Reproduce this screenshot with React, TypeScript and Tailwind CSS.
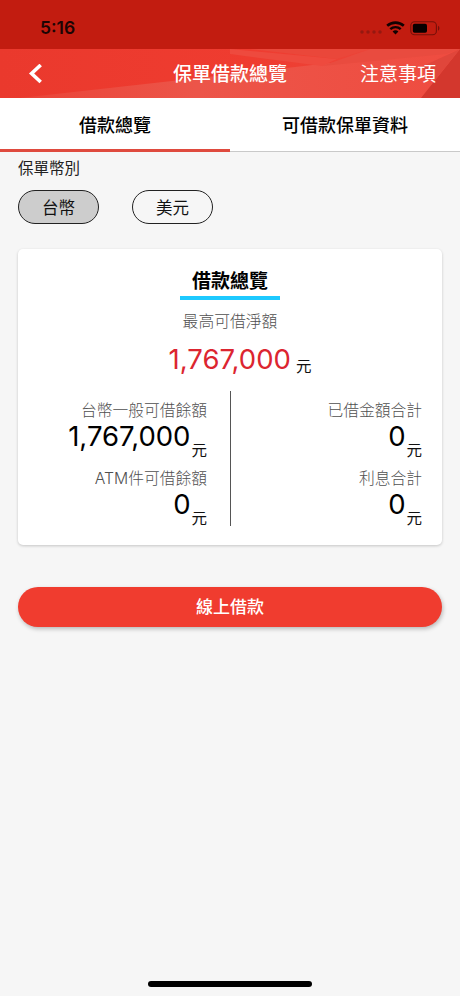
function StatusBar() {
  return (
    <div className="flex h-[49px] items-center justify-between bg-[#c21c10] pl-[40px] pr-[20px] pt-[7px]">
      <span className="text-[17.5px] font-semibold leading-5 text-[#1c0504]">5:16</span>
      <div className="flex items-center">
        <svg width="22" height="4" viewBox="0 0 22 4" className="mr-[4px] mt-[8px]" fill="#951810">
          <circle cx="2" cy="2" r="1.7" />
          <circle cx="8" cy="2" r="1.7" />
          <circle cx="14" cy="2" r="1.7" />
          <circle cx="20" cy="2" r="1.7" />
        </svg>
        <svg width="19" height="14" viewBox="0 0 19 14" fill="none" stroke="#120202" className="mr-[5px]">
          <path d="M1.2 4.8C5.8 .5 13.2 .5 17.8 4.8" strokeWidth="2.6" />
          <path d="M4.3 8.1C7.2 5.4 11.8 5.4 14.7 8.1" strokeWidth="2.4" />
          <path d="M6.6 10.4C8.3 8.9 10.7 8.9 12.4 10.4L9.5 13.4Z" fill="#120202" stroke="none" />
        </svg>
        <svg width="30" height="15" viewBox="0 0 30 15">
          <rect x=".8" y=".8" width="25.6" height="13" rx="3.8" fill="none" stroke="#761009" strokeWidth="1.1" />
          <rect x="2.8" y="2.8" width="14.2" height="9" rx="1.8" fill="#080000" />
          <path d="M28 4.8C29.9 5.6 29.9 9 28 9.8Z" fill="#761009" />
        </svg>
      </div>
    </div>
  );
}

function Header() {
  return (
    <header className="relative h-[49px] bg-[#ec3b2f]">
      <svg className="absolute inset-0" width="460" height="49" viewBox="0 0 460 49" preserveAspectRatio="none">
        <defs>
          <linearGradient id="base" x1="0" x2="1" y1="0" y2="0">
            <stop offset="0" stopColor="#ea392d" />
            <stop offset=".55" stopColor="#ef3c30" />
            <stop offset="1" stopColor="#ea4a3e" />
          </linearGradient>
          <linearGradient id="sweep" x1="0" x2="1" y1="0" y2="0">
            <stop offset="0" stopColor="#ea4438" />
            <stop offset=".4" stopColor="#ec5549" />
            <stop offset="1" stopColor="#ef4c40" />
          </linearGradient>
        </defs>
        <rect width="460" height="49" fill="url(#base)" />
        <path d="M20 49L172 32L330 14L460 0V49Z" fill="url(#sweep)" />
        <path d="M230 0L337 10L322 17L230 5Z" fill="#ee4a3e" />
        <path d="M322 17L370 0H460L446 5Z" fill="#e94b3f" />
        <path d="M337 10L370 0H250Z" fill="#ea473a" />
        <path d="M460 0L421 49H460Z" fill="#d3372d" />
        <path d="M460 0L421 18L435 31Z" fill="#e0463b" />
      </svg>
      <div className="relative grid h-full grid-cols-[1fr_auto_1fr] items-center text-[19px] leading-6 text-white">
        <svg className="ml-[28px]" width="15" height="20" viewBox="0 0 15 20" fill="none" stroke="white" strokeWidth="3.6">
          <path d="M12.7 1L3.6 9.5L12.7 18" />
        </svg>
        <span className="pt-[3px] font-medium">保單借款總覽</span>
        <span className="justify-self-end pr-[24px] pt-[3px]">注意事項</span>
      </div>
    </header>
  );
}

function Amount({ label, value }: { label: string; value: string }) {
  return (
    <div className="flex h-[68px] flex-col items-end">
      <div className="text-[15.75px] font-light leading-6 text-[#505050]">{label}</div>
      <div className="flex items-start">
        <span className="mr-[1px] mt-[-2px] text-[27.5px] leading-[30px] text-black">{value}</span>
        <span className="mt-[16px] h-4 text-[15.5px] leading-6 text-[#111]">元</span>
      </div>
    </div>
  );
}

export default function App() {
  return (
    <main className="flex h-[996px] w-[460px] flex-col overflow-hidden bg-[#f6f6f6] font-['Inter','Noto_Sans_CJK_TC',sans-serif] text-black">
      <StatusBar />
      <Header />
      <nav className="grid h-[54px] grid-cols-2 text-center text-[18px] font-medium leading-[55px]">
        <div className="h-[54px] border-b-[3px] border-[#df4a3e] bg-white">借款總覽</div>
        <div className="h-[54px] border-b border-[#c9c9c9] bg-white">可借款保單資料</div>
      </nav>
      <section className="px-[18px]">
        <div className="mt-[5px] text-[15.5px] leading-6 text-[#222]">保單幣別</div>
        <div className="mt-[9px] flex gap-[33px] text-[16.5px] text-[#111]">
          <button className="h-[34px] w-[81px] rounded-full border border-[#222] bg-[#cdcdcd] pt-[2px]">台幣</button>
          <button className="h-[34px] w-[81px] rounded-full border border-[#222] pt-[2px]">美元</button>
        </div>
      </section>
      <section className="mx-[18px] mt-[25px] flex h-[296px] flex-col items-center rounded-[5px] bg-white shadow-[0_1px_3px_rgba(0,0,0,0.2)]">
        <h1 className="mt-[17px] h-[34px] w-[100px] border-b-4 border-[#1dc9ff] text-center text-[19px] font-bold leading-[32px]">借款總覽</h1>
        <div className="mt-[10px] text-[15.8px] font-light leading-6 text-[#505050]">最高可借淨額</div>
        <div className="mt-[9px] flex h-[32px] items-start pl-[20px]">
          <span className="text-[27.5px] leading-[33px] text-[#dc2530]">1,767,000</span>
          <span className="ml-[5px] mt-[12px] h-5 text-[15.5px] leading-6 text-[#111]">元</span>
        </div>
        <div className="mt-[16px] grid h-[135px] w-full grid-cols-[213px_211px]">
          <div className="h-[135px] border-r border-[#555] pr-[23px] pt-[8px]">
            <Amount label="台幣一般可借餘額" value="1,767,000" />
            <Amount label="ATM件可借餘額" value="0" />
          </div>
          <div className="h-[135px] pr-[20px] pt-[8px]">
            <Amount label="已借金額合計" value="0" />
            <Amount label="利息合計" value="0" />
          </div>
        </div>
      </section>
      <button className="mx-[18px] mt-[42px] h-[40px] shrink-0 rounded-full bg-[#f03c2f] pt-[2px] text-[17px] font-medium text-white shadow-[1px_2px_4px_rgba(0,0,0,0.25)]">線上借款</button>
      <div className="mx-auto mb-[9px] mt-auto h-[6px] w-[164px] rounded-full bg-black" />
    </main>
  );
}
